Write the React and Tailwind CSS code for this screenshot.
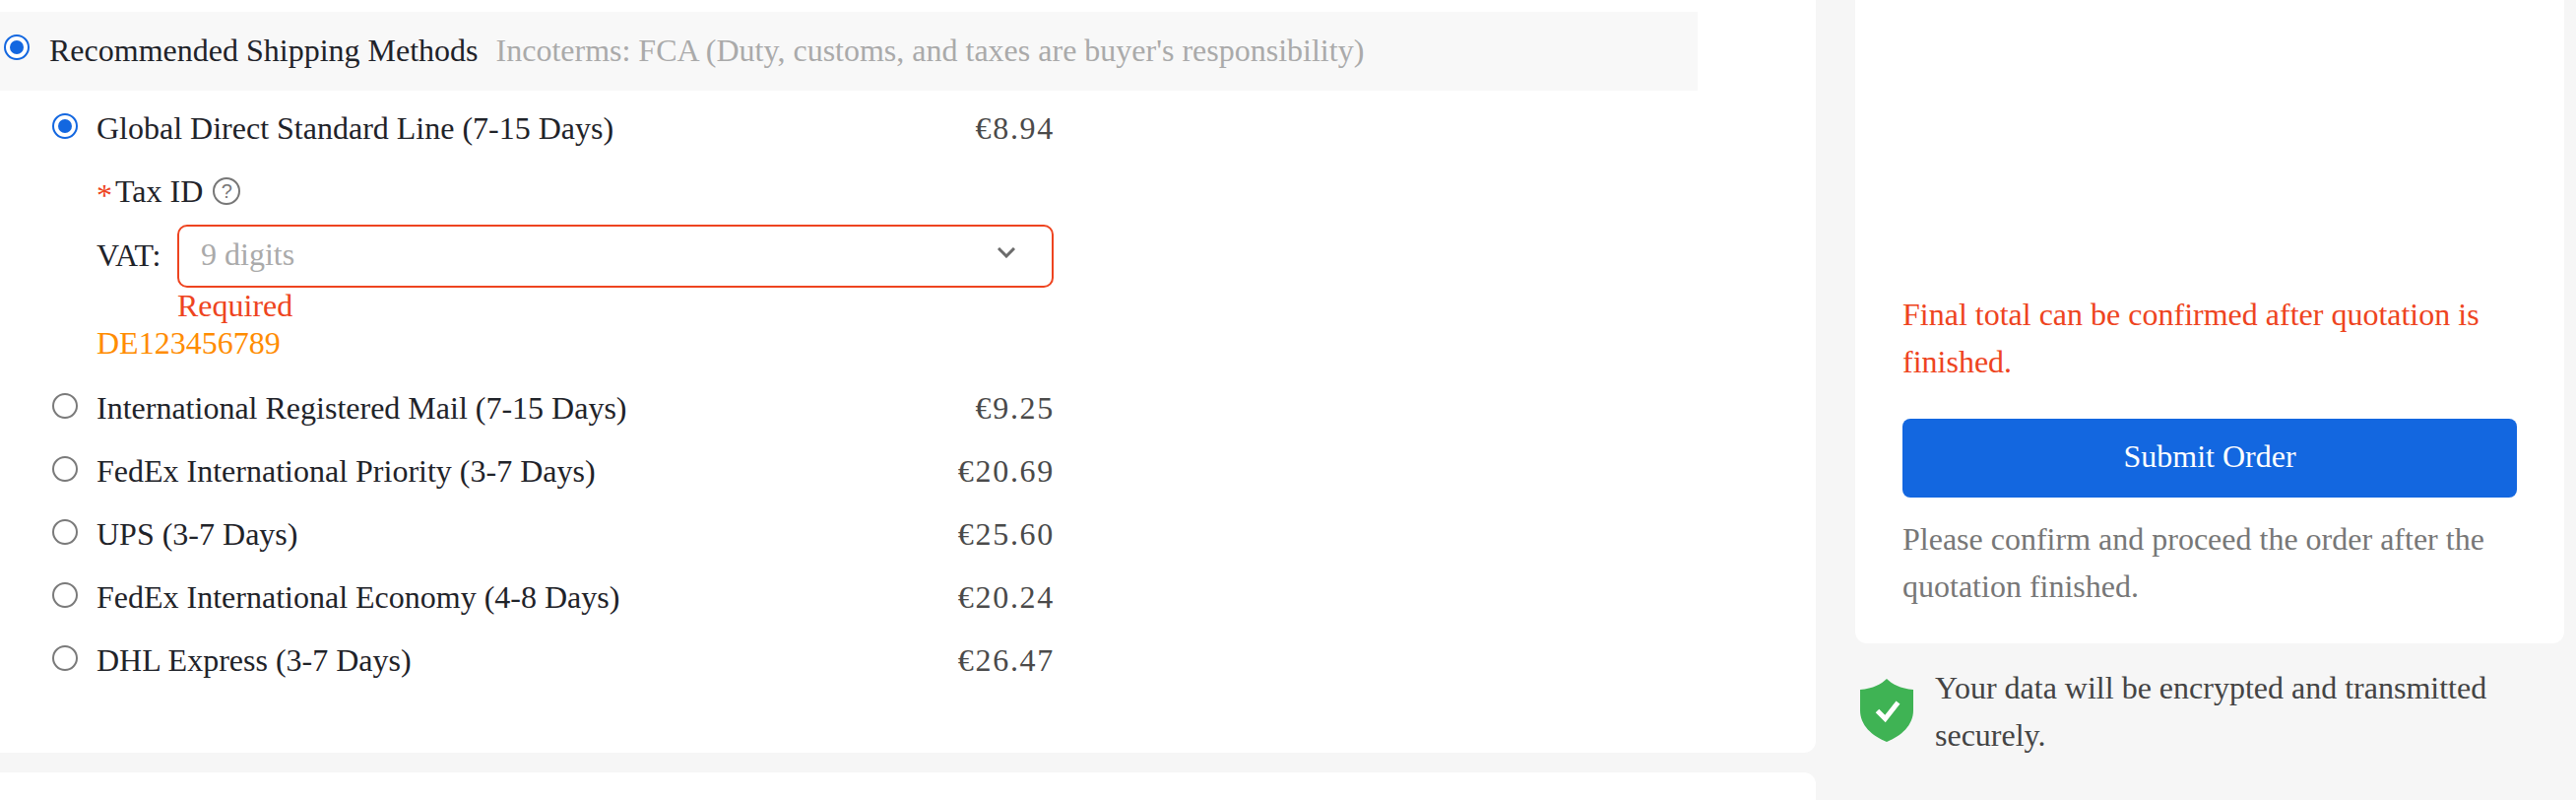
import React from 'react';

const serif = '[font-family:"Liberation_Serif",serif]';

const methods = [
  { name: 'International Registered Mail (7-15 Days)', price: '€9.25' },
  { name: 'FedEx International Priority (3-7 Days)', price: '€20.69' },
  { name: 'UPS (3-7 Days)', price: '€25.60' },
  { name: 'FedEx International Economy (4-8 Days)', price: '€20.24' },
  { name: 'DHL Express (3-7 Days)', price: '€26.47' },
];

const Radio = ({ checked = false, className = '' }) => (
  <span
    className={`flex h-[26px] w-[26px] shrink-0 items-center justify-center rounded-full border-2 bg-white ${
      checked ? 'border-[#1367e0]' : 'border-[#7a7a7a]'
    } ${className}`}
  >
    {checked && <span className="h-[14px] w-[14px] rounded-full bg-[#1367e0]" />}
  </span>
);

const MethodRow = ({ name, price, checked }) => (
  <div className="flex h-16 w-[1017px] items-center">
    <Radio checked={checked} className="mb-1" />
    <span className="ml-[19px] flex-1 text-[#1f2329]">{name}</span>
    <span className="-mr-[1px] tracking-[1.7px] text-[#4a4a4a]">{price}</span>
  </div>
);

const ShieldIcon = () => (
  <svg viewBox="0 0 54 64" className="h-16 w-[54px] shrink-0">
    <path
      d="M27 0C32 5 41 10 54 11V32C54 47 42 58 27 64C12 58 0 47 0 32V11C13 10 22 5 27 0Z"
      fill="#3fb354"
    />
    <path d="M17.5 32.5L25.5 40.5L38.5 24" fill="none" stroke="#fff" strokeWidth="5" />
  </svg>
);

export default function App() {
  return (
    <div className={`flex h-[812px] w-[2616px] overflow-hidden bg-[#f6f6f6] text-[32px] ${serif}`}>
      <div className="w-[1844px] shrink-0">
        <div className="h-[764px] rounded-br-xl bg-white pt-3">
          <div className="flex h-20 w-[1724px] items-center bg-[#f8f8f8] pb-[2px] pl-1">
            <Radio checked className="mb-1.5" />
            <span className="ml-5 text-[#1f2329]">Recommended Shipping Methods</span>
            <span className="ml-[18px] text-[#aaaaaa]">
              Incoterms: FCA (Duty, customs, and taxes are buyer's responsibility)
            </span>
          </div>
          <div className="pl-[53px] pt-1.5">
            <MethodRow name="Global Direct Standard Line (7-15 Days)" price="€8.94" checked />
            <div className="pl-[45px]">
              <div className="flex h-16 items-center text-[#1f2329]">
                <span className="mr-[3px] mt-2 text-[#ee4420]">*</span>
                <span>Tax ID</span>
                <span className="ml-[10px] flex h-7 w-7 items-center justify-center rounded-full border-2 border-[#777777] font-['Liberation_Sans',sans-serif] text-[20px] text-[#777777]">
                  ?
                </span>
              </div>
              <div className="mt-0.5 flex w-[972px] items-center">
                <span className="w-[82px] pb-[2px] text-[#1f2329]">VAT:</span>
                <div className="flex h-16 flex-1 items-center justify-between rounded-[10px] border-2 border-[#ee4420] pl-[22px] pr-[37px]">
                  <span className="pb-1 text-[#aaaaaa]">9 digits</span>
                  <svg viewBox="0 0 18 11" className="mb-2 h-[11px] w-[18px]" fill="none" stroke="#6b6b6b" strokeWidth="3">
                    <path d="M1 1L9 9L17 1" />
                  </svg>
                </div>
              </div>
              <div className="ml-[82px] h-9 leading-9 text-[#ee4420]">Required</div>
              <div className="h-10 leading-10 text-[#ff8c00]">DE123456789</div>
            </div>
            <div className="mt-3.5">
              {methods.map((m) => (
                <MethodRow key={m.name} name={m.name} price={m.price} />
              ))}
            </div>
          </div>
        </div>
        <div className="mt-5 h-7 rounded-tr-xl bg-white" />
      </div>
      <div className="ml-10 w-[720px] shrink-0">
        <div className="flex h-[653px] flex-col justify-end rounded-b-xl bg-white px-12 pb-[34px]">
          <p className="leading-12 text-[#ee4420]">Final total can be confirmed after quotation is finished.</p>
          <button className="mt-[34px] h-20 w-[624px] rounded-lg bg-[#1367e0] pb-1 text-white">Submit Order</button>
          <p className="mt-[18px] leading-12 text-[#777777]">Please confirm and proceed the order after the quotation finished.</p>
        </div>
        <div className="mt-[21px] flex items-start pl-[5px]">
          <div className="mt-[15px]">
            <ShieldIcon />
          </div>
          <p className="ml-[22px] leading-12 text-[#444444]">Your data will be encrypted and transmitted securely.</p>
        </div>
      </div>
    </div>
  );
}
